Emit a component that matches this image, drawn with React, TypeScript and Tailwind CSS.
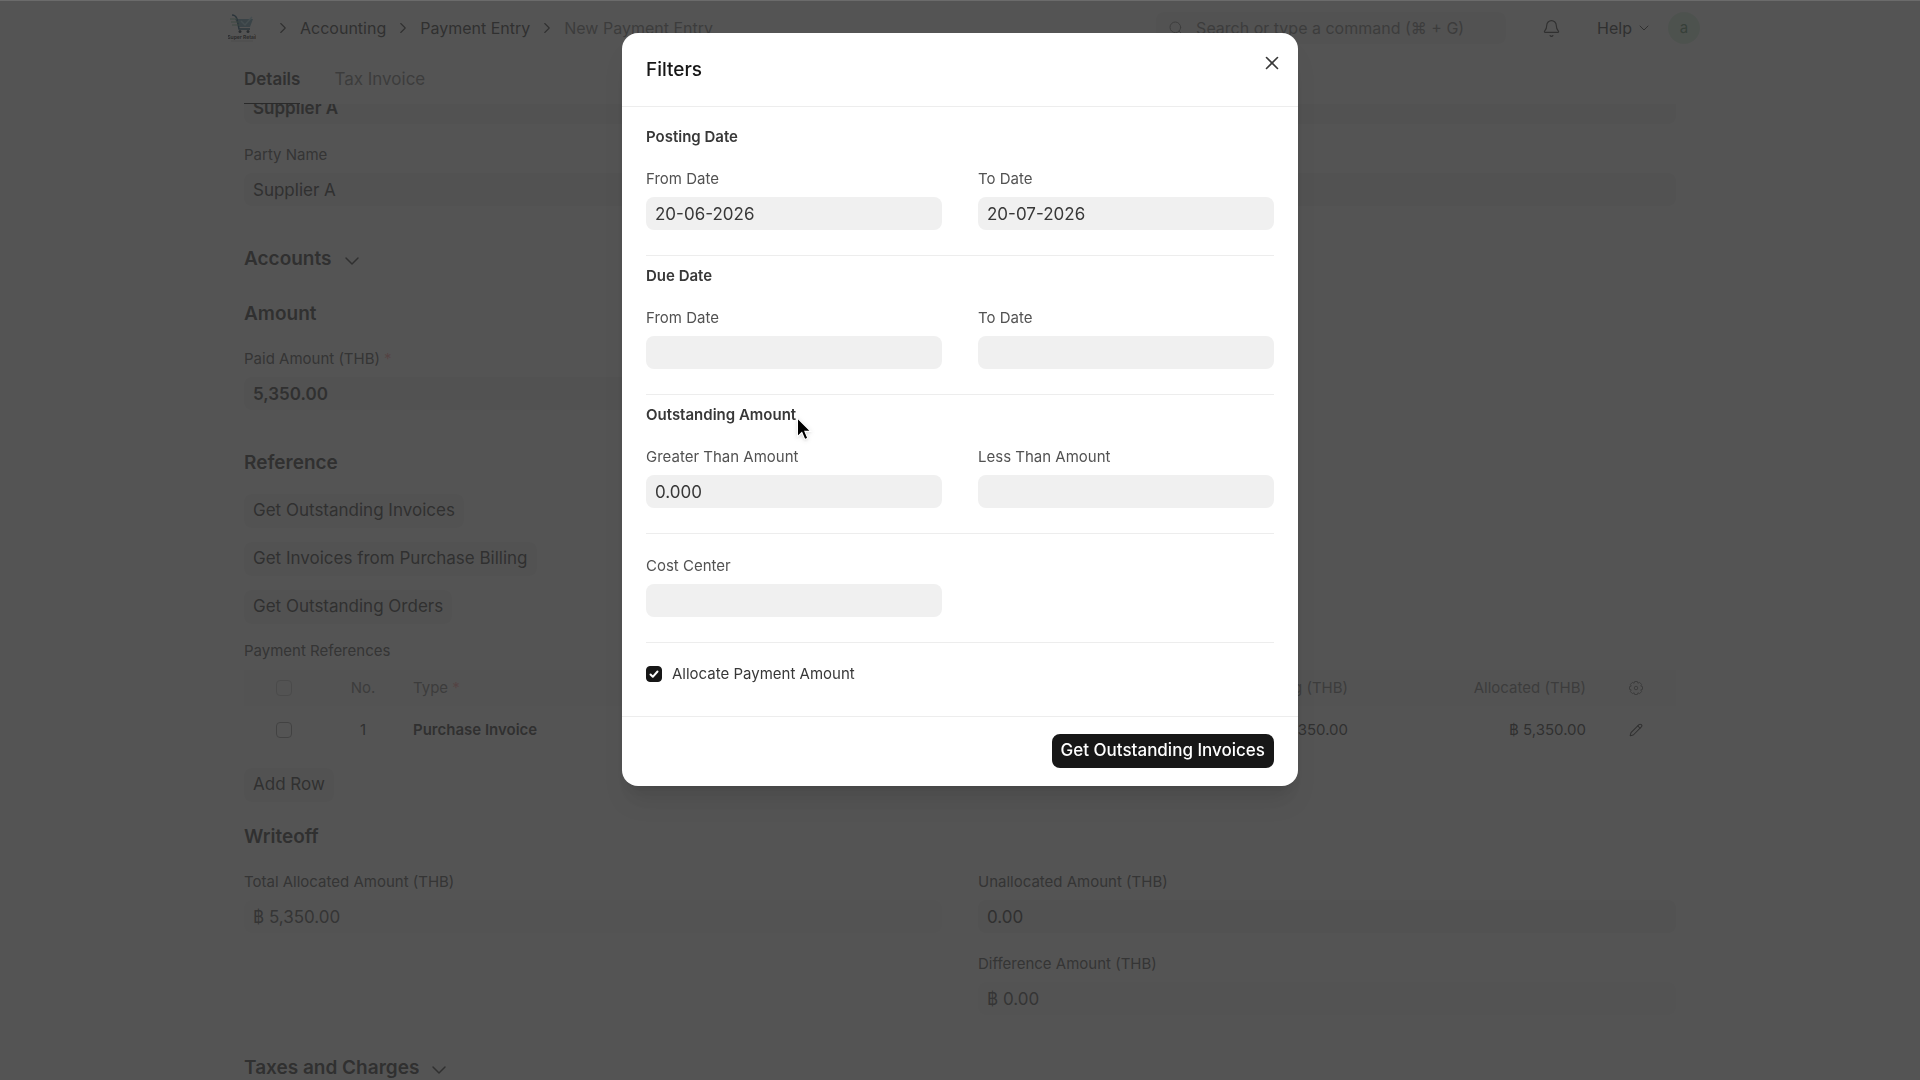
import type { ReactNode } from 'react';
import { Bell, ChevronDown, ChevronRight, Pencil, Search, X } from 'lucide-react';

const inputBase = 'h-[33px] w-full rounded-lg px-[9px] text-[17px] outline-none';

interface FieldProps {
  id: string;
  label: string;
  value?: string;
  required?: boolean;
  readOnly?: boolean;
  strong?: boolean;
}

function Field({ id, label, value = '', required, readOnly, strong }: FieldProps) {
  return (
    <div className="flex flex-col gap-2">
      <label htmlFor={id} className="text-[15px] leading-5 text-[#525252]">
        {label}
        {required && <span className="ml-1 text-red-300">*</span>}
      </label>
      <input
        id={id}
        type="text"
        defaultValue={value}
        readOnly={readOnly}
        className={`${inputBase} ${
          readOnly ? 'bg-[#f8f8f8] text-[#525252]' : 'bg-[#f0f0f0] text-[#383838]'
        } ${strong ? 'font-semibold' : ''}`}
      />
    </div>
  );
}

function Heading({ children, collapsible }: { children: ReactNode; collapsible?: boolean }) {
  return (
    <h2 className="flex items-center gap-2 text-[19px] leading-7 font-semibold text-[#383838]">
      {children}
      {collapsible && <ChevronDown className="mt-1 size-6" strokeWidth={1.5} />}
    </h2>
  );
}

function GrayButton({ children }: { children: ReactNode }) {
  return (
    <button type="button" className="h-[34px] rounded-lg bg-[#f3f3f3] px-[9px] text-[17px] text-[#383838]">
      {children}
    </button>
  );
}

function Logo() {
  return (
    <svg viewBox="0 0 28 28" className="h-7 w-7" role="img" aria-label="Super Retail">
      <path d="M7 5h18l-3 8H11z" fill="#6da3b8" />
      <path d="M4 1c3 0 4 1 5 4l2 10h11" fill="none" stroke="#1f5673" strokeWidth="1.5" />
      <path d="M2 5h7M3 8h8M4 11h8" stroke="#7fb795" strokeWidth="1" />
      <path d="M13 7l4 4 7-8" fill="none" stroke="#a9d8e6" strokeWidth="1.5" />
      <circle cx="12" cy="17.5" r="1.5" fill="#1b2b3a" />
      <circle cx="20" cy="17.5" r="1.5" fill="#1b2b3a" />
      <text x="14" y="25" textAnchor="middle" fontSize="5" fontWeight="700" fill="#1b1b1b">
        Super Retail
      </text>
      <path d="M3 27h22" stroke="#999" strokeWidth="0.5" />
    </svg>
  );
}

function Gear() {
  return (
    <svg viewBox="0 0 16 16" className="size-4" fill="none" stroke="currentColor" aria-hidden="true">
      <path
        d="M6.6 1.5h2.8l.5 1.7 1.7-.8 2 2-.8 1.7 1.7.5v2.8l-1.7.5.8 1.7-2 2-1.7-.8-.5 1.7H6.6l-.5-1.7-1.7.8-2-2 .8-1.7-1.7-.5V6.600l1.700-.5-.8-1.700 2-2 1.700.8z"
        strokeLinejoin="round"
      />
      <circle cx="8" cy="8" r="1.75" />
    </svg>
  );
}

function Navbar() {
  return (
    <header className="flex h-14 shrink-0 items-center pr-[220px] pl-[228px] text-base text-[#383838]">
      <a href="#home">
        <Logo />
      </a>
      <nav className="ml-[18px] flex items-center gap-2">
        <ChevronRight className="size-[18px]" strokeWidth={1.5} />
        <a href="#accounting">Accounting</a>
        <ChevronRight className="size-[18px]" strokeWidth={1.5} />
        <a href="#payment-entry">Payment Entry</a>
        <ChevronRight className="size-[18px]" strokeWidth={1.5} />
        <a href="#new" className="text-[#7c7c7c]">New Payment Entry</a>
      </nav>
      <div className="ml-auto flex items-center">
        <label className="flex h-8 w-[350px] items-center gap-3 rounded-lg bg-[#f3f3f3] px-3">
          <Search className="size-4 shrink-0 text-[#7c7c7c]" strokeWidth={1.5} />
          <input
            type="search"
            aria-label="Search"
            placeholder="Search or type a command (⌘ + G)"
            className="w-full bg-transparent outline-none placeholder:text-[#7c7c7c]"
          />
        </label>
        <button type="button" aria-label="Notifications" className="ml-9">
          <Bell className="size-[19px]" strokeWidth={1.5} />
        </button>
        <button type="button" className="ml-9 flex items-center gap-1">
          Help
          <ChevronDown className="size-4" strokeWidth={1.5} />
        </button>
        <button type="button" className="ml-4 size-8 rounded-full bg-[#d9f0df] text-[15px] text-[#5f8f6c]">
          a
        </button>
      </div>
    </header>
  );
}

function References() {
  return (
    <table className="mt-[9px] w-full table-fixed text-[15px] text-[#383838]">
      <thead className="bg-[#f8f8f8] text-[#7c7c7c]">
        <tr className="h-9">
          <th className="w-20 font-normal">
            <input type="checkbox" aria-label="Select all" className="mx-auto block size-4 appearance-none rounded border border-[#c7c7c7]" />
          </th>
          <th className="w-[78px] font-normal">No.</th>
          <th className="pl-[11px] text-left font-normal">
            Type <span className="text-red-300">*</span>
          </th>
          <th className="w-[238px] pr-[18px] text-right font-normal">Outstanding (THB)</th>
          <th className="w-[238px] pr-[18px] text-right font-normal">Allocated (THB)</th>
          <th className="w-[72px] pr-2">
            <button type="button" aria-label="Configure columns" className="mx-auto block">
              <Gear />
            </button>
          </th>
        </tr>
      </thead>
      <tbody>
        <tr className="h-12">
          <td>
            <input type="checkbox" aria-label="Select row 1" className="mx-auto block size-4 appearance-none rounded border border-[#999]" />
          </td>
          <td className="text-center">1</td>
          <td className="pl-[11px] font-semibold">Purchase Invoice</td>
          <td className="pr-[18px] text-right">฿ 5,350.00</td>
          <td className="pr-[18px] text-right">฿ 5,350.00</td>
          <td className="pr-2">
            <button type="button" aria-label="Edit row" className="mx-auto block">
              <Pencil className="size-3.5" strokeWidth={1.75} />
            </button>
          </td>
        </tr>
      </tbody>
    </table>
  );
}

function PaymentEntry() {
  return (
    <div className="flex h-screen flex-col overflow-hidden bg-white">
      <Navbar />
      <div className="flex h-12 shrink-0 gap-[34px] px-[244px] text-[17px]">
        <button type="button" className="border-b border-[#171717] font-semibold text-[#383838]">
          Details
        </button>
        <button type="button" className="text-[#7c7c7c]">Tax Invoice</button>
      </div>

      <main className="flex-1 overflow-hidden px-[244px]">
        {/* Party row is scrolled partly under the tabs */}
        <div className="-mt-[13px] grid grid-cols-2 gap-x-9 gap-y-[21px]">
          <input
            type="text"
            aria-label="Party"
            defaultValue="Supplier A"
            className={`${inputBase} bg-[#f0f0f0] font-semibold text-[#383838]`}
          />
          <input type="text" aria-label="Bank Account" className={`${inputBase} bg-[#f0f0f0]`} />
          <Field id="party-name" label="Party Name" value="Supplier A" />
          <Field id="contact" label="Contact" />
        </div>

        <div className="mt-[39px]">
          <Heading collapsible>Accounts</Heading>
        </div>

        <section className="mt-[27px]">
          <Heading>Amount</Heading>
          <div className="mt-[21px] grid grid-cols-2 gap-9">
            <Field id="paid" label="Paid Amount (THB)" value="5,350.00" required strong />
          </div>
        </section>

        <section className="mt-[39px]">
          <Heading>Reference</Heading>
          <div className="mt-[17px] flex flex-col items-start gap-3.5">
            <GrayButton>Get Outstanding Invoices</GrayButton>
            <GrayButton>Get Invoices from Purchase Billing</GrayButton>
            <GrayButton>Get Outstanding Orders</GrayButton>
          </div>
          <p className="mt-[17px] text-[15px] leading-5 text-[#525252]">Payment References</p>
          <References />
          <div className="mt-3.5">
            <GrayButton>Add Row</GrayButton>
          </div>
        </section>

        <section className="mt-[21px]">
          <Heading>Writeoff</Heading>
          <div className="mt-[21px] grid grid-cols-2 items-start gap-x-9">
            <Field id="allocated" label="Total Allocated Amount (THB)" value="฿ 5,350.00" readOnly />
            <div className="flex flex-col gap-[21px]">
              <Field id="unallocated" label="Unallocated Amount (THB)" value="0.00" />
              <Field id="difference" label="Difference Amount (THB)" value="฿ 0.00" readOnly />
            </div>
          </div>
        </section>

        <div className="mt-[39px]">
          <Heading collapsible>Taxes and Charges</Heading>
        </div>
      </main>
    </div>
  );
}

function FilterSection({ title, children }: { title: ReactNode; children: ReactNode }) {
  return (
    <section className="border-b border-[#ededed] pt-2.5 pb-[25px]">
      <h3 className="text-[15px] leading-5 font-semibold text-[#383838]">{title}</h3>
      <div className="mt-[22px] grid grid-cols-2 gap-9">{children}</div>
    </section>
  );
}

function Pointer() {
  return (
    <svg viewBox="0 0 14 22" className="absolute top-3 left-full h-6 w-4 drop-shadow" aria-hidden="true">
      <path
        d="M1 1v17l4-3.8 2.7 6.4 2.8-1.200-2.7-6.200h5.400z"
        fill="#000"
        stroke="#fff"
        strokeWidth="1"
      />
    </svg>
  );
}

function FiltersDialog() {
  return (
    <div className="fixed inset-0 flex items-start justify-center border-t border-[#6b6b6b] bg-[#2e2e2e]/82 pt-8">
      <div
        role="dialog"
        aria-modal="true"
        aria-labelledby="dialog-title"
        className="w-[676px] rounded-2xl bg-white shadow-xl"
      >
        <div className="flex h-[74px] items-start justify-between border-b border-[#ededed] pt-[19px] pr-[15px] pl-6">
          <h1 id="dialog-title" className="text-[19px] leading-9 font-medium text-[#171717]">
            Filters
          </h1>
          <button type="button" aria-label="Close" className="text-[#383838]">
            <X className="size-[22px]" strokeWidth={1.75} />
          </button>
        </div>

        <div className="px-6 pt-2.5">
          <FilterSection title="Posting Date">
            <Field id="posting-from" label="From Date" value="20-06-2026" />
            <Field id="posting-to" label="To Date" value="20-07-2026" />
          </FilterSection>
          <FilterSection title="Due Date">
            <Field id="due-from" label="From Date" />
            <Field id="due-to" label="To Date" />
          </FilterSection>
          <FilterSection
            title={
              <span className="relative">
                Outstanding Amount
                <Pointer />
              </span>
            }
          >
            <Field id="greater" label="Greater Than Amount" value="0.000" />
            <Field id="less" label="Less Than Amount" />
          </FilterSection>
          <section className="grid grid-cols-2 gap-9 border-b border-[#ededed] pt-[22px] pb-[25px]">
            <Field id="cost-center" label="Cost Center" />
          </section>
          <div className="flex pt-[21px] pb-8">
            <label className="flex h-5 items-center gap-2.5 text-[15px] text-[#383838]">
              <span className="grid">
                <input
                  type="checkbox"
                  defaultChecked
                  className="peer col-start-1 row-start-1 size-4 appearance-none rounded border border-[#171717] checked:bg-[#171717]"
                />
                <svg viewBox="0 0 16 16" className="pointer-events-none col-start-1 row-start-1 size-4" aria-hidden="true">
                  <path d="M4.5 8.5l2.3 2.3 4.7-5.3" fill="none" stroke="#fff" strokeWidth="2" strokeLinecap="round" strokeLinejoin="round" />
                </svg>
              </span>
              Allocate Payment Amount
            </label>
          </div>
        </div>

        <div className="flex justify-end border-t border-[#ededed] px-6 pt-[17px] pb-[18px]">
          <button type="button" className="h-[34px] rounded-lg bg-[#171717] px-[9px] text-[17px] font-medium text-white">
            Get Outstanding Invoices
          </button>
        </div>
      </div>
    </div>
  );
}

export default function App() {
  return (
    <div className="font-[Inter,'Liberation_Sans',sans-serif]">
      <PaymentEntry />
      <FiltersDialog />
    </div>
  );
}
